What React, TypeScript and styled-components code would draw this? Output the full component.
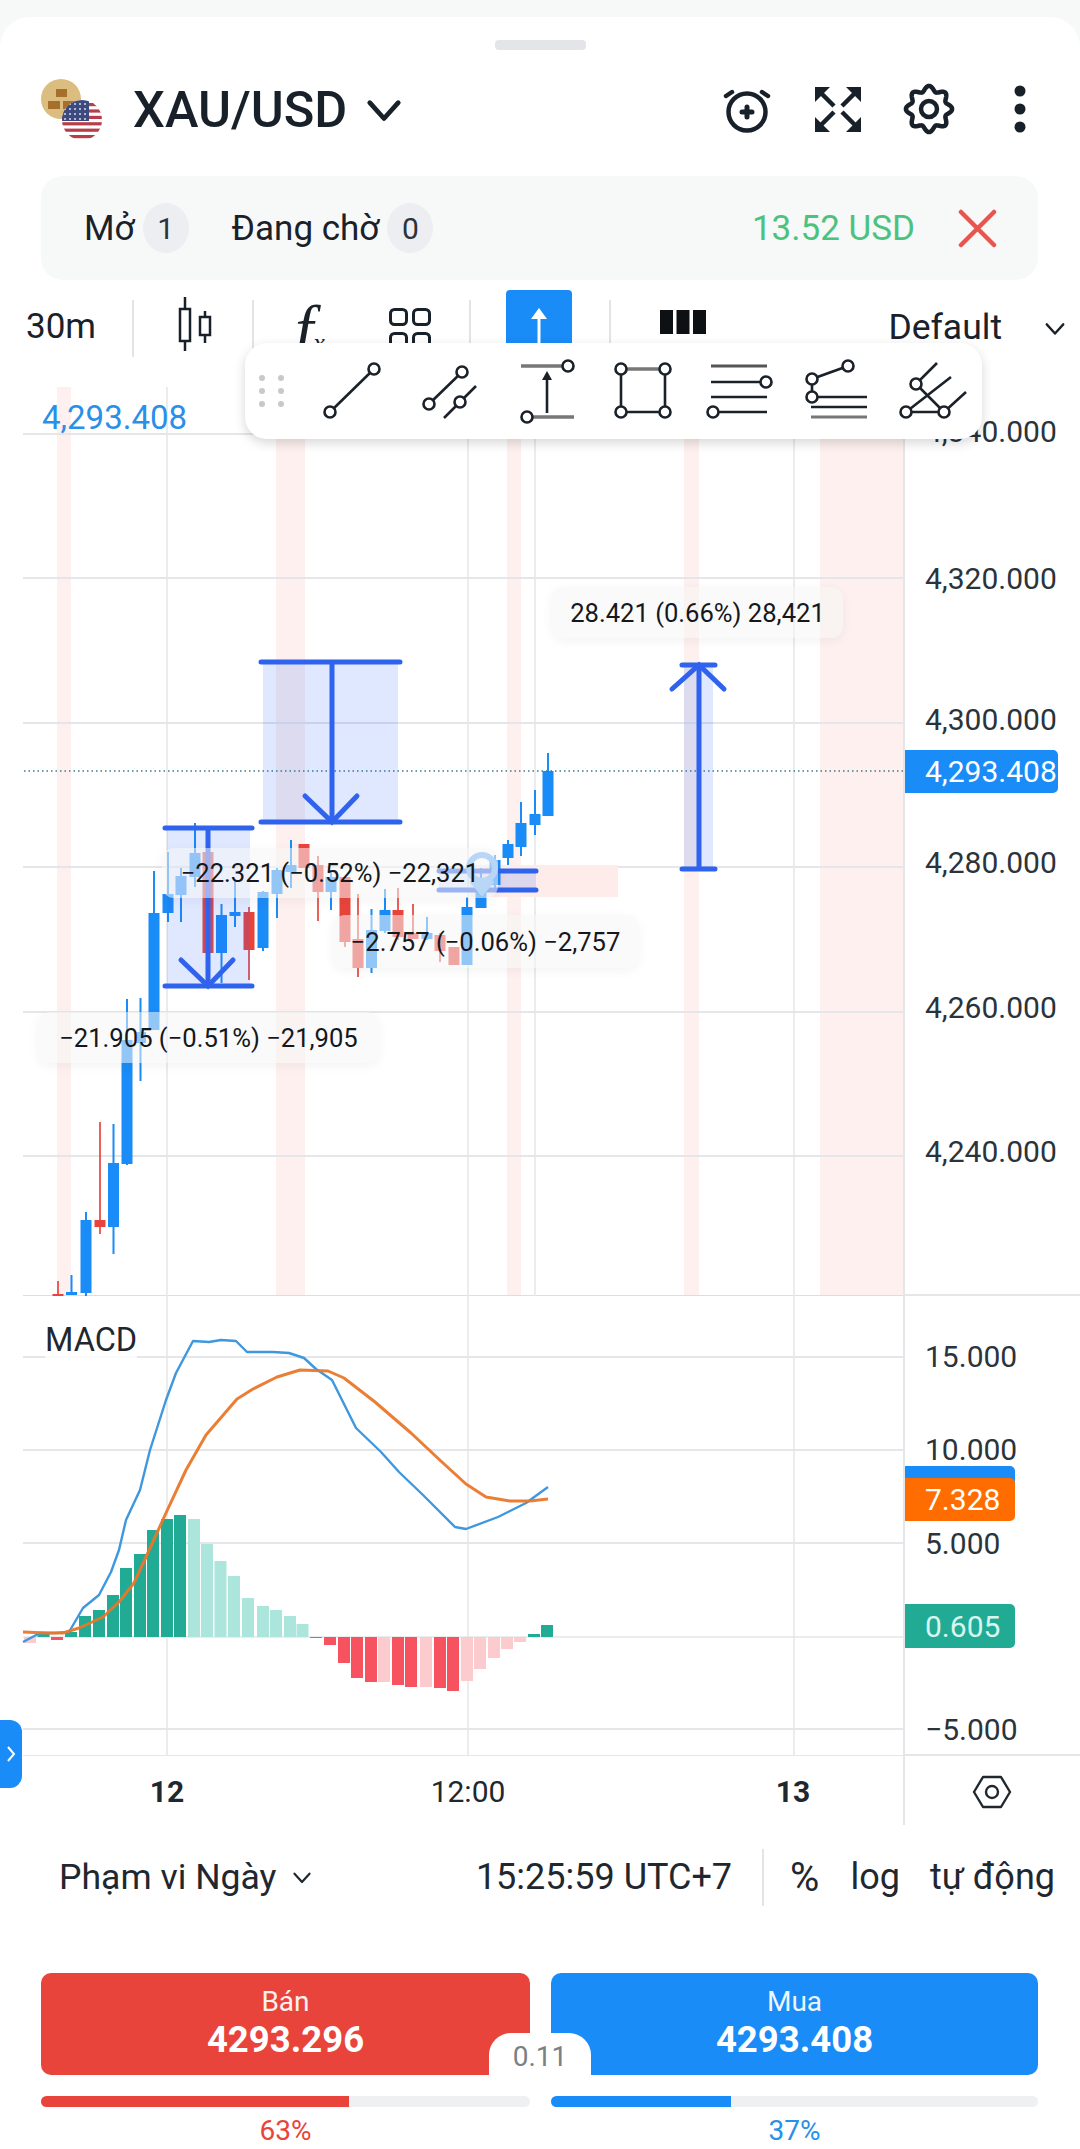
import React from 'react'
import styled, { createGlobalStyle } from 'styled-components'

const GlobalStyle = createGlobalStyle`
  html, body {
    margin: 0;
    padding: 0;
    background: #f7f8f8;
    font-family: Roboto, "Liberation Sans", sans-serif;
    color: #1a2129;
  }
  #root {
    width: 1080px;
  }
`

const BLUE = '#1a8cf7'
const RED = '#e8443c'
const TOOL_BLUE = '#2f63ee'
const GRID = '#e4e6e9'

// x, wick top, wick bottom, body top, body bottom, up?
const CANDLES: [number, number, number, number, number, boolean][] = [
  [58, 1281, 1295, 1294, 1296, false],
  [71.5, 1275, 1295, 1292, 1295, true],
  [86, 1212, 1296, 1220, 1293, true],
  [100, 1122, 1234, 1220, 1227, false],
  [113.5, 1124, 1254, 1163, 1227, true],
  [127, 999, 1165, 1040, 1164, true],
  [140.5, 998, 1081, 1032, 1043, true],
  [154, 871, 1030, 913, 1030, true],
  [168, 852, 922, 894, 913, true],
  [181, 868, 922, 876, 895, true],
  [195, 823, 887, 853, 877, true],
  [208, 852, 953, 852, 953, false],
  [221.5, 904, 983, 915, 953, true],
  [235, 880, 927, 912, 916, true],
  [249, 907, 980, 912, 950, false],
  [263, 891, 951, 892, 948, true],
  [277, 868, 918, 870, 894, true],
  [291, 840, 888, 865, 872, true],
  [304, 844, 868, 844, 868, false],
  [318, 856, 921, 865, 892, false],
  [331, 870, 910, 877, 892, true],
  [345, 877, 947, 877, 942, false],
  [358, 894, 977, 939, 968, false],
  [371.5, 909, 973, 930, 968, true],
  [385, 889, 933, 910, 931, true],
  [398, 888, 940, 910, 937, false],
  [413, 904, 939, 933, 939, false],
  [427, 917, 940, 933, 939, true],
  [440, 933, 962, 935, 951, false],
  [454, 947, 965, 947, 965, false],
  [467, 897, 965, 907, 965, true],
  [481, 868, 908, 882, 908, true],
  [495, 855, 890, 860, 885, true],
  [508, 840, 865, 844, 858, true],
  [521, 802, 856, 823, 847, true],
  [535, 790, 835, 814, 825, true],
  [548, 753, 816, 771, 816, true],
]

// x, height above zero (negative below), strong colour?
const HISTOGRAM: [number, number, boolean][] = [
  [30, -6, false], [43.5, 4, true], [57, -3, true], [71, 5, true], [85, 21, true], [99, 27, true],
  [113, 42, true], [126, 69, true], [140, 83, true], [153, 107, true], [167, 118, true], [180, 122, true],
  [194, 118, false], [207, 93, false], [220.5, 76, false], [234, 61, false], [248, 39, false], [263, 31, false],
  [276, 27, false], [290, 21, false], [302.5, 13, false], [316, -1, true], [330, -8, true], [344, -26, true],
  [357, -41, true], [371, -45, true], [384, -45, false], [398, -48, true], [411, -50, true], [426, -50, false],
  [440, -51, true], [453, -54, true], [467, -44, false], [480, -32, false], [494, -21, false], [507, -12, false],
  [520, -5, false], [534, 3, true], [547, 12, true],
]

const MACD_LINE =
  '23,1642 40,1633 55,1633 69,1632 83,1608 99,1595 111,1572 119,1550 126,1520 140,1490 150,1450 166,1400 176,1373 193,1341 209,1342 221,1340 236,1341 247,1352 273,1352 289,1353 304,1358 316,1369 332,1380 356,1428 381,1452 399,1472 423,1495 455,1527 466,1529 498,1517 526,1503 548,1487'
const SIGNAL_LINE =
  '23,1632 47,1633 63,1633 79,1628 103,1617 119,1602 134,1583 146,1557 166,1513 186,1470 206,1435 237,1399 253,1389 277,1377 300,1370 328,1371 344,1378 375,1402 411,1433 443,1463 466,1484 486,1497 510,1501 530,1501 548,1499'

const gearPath = (() => {
  const pts: string[] = []
  for (let i = 0; i < 160; i++) {
    const a = (i / 160) * Math.PI * 2 - Math.PI / 2
    const r = 20.5 + 2.6 * Math.cos(8 * (a + Math.PI / 2))
    pts.push(`${(28 + r * Math.cos(a)).toFixed(2)},${(28 + r * Math.sin(a)).toFixed(2)}`)
  }
  return pts.join(' ')
})()

const Sheet = styled.div`
  margin-top: 17px;
  width: 1080px;
  height: 2132px;
  background: #fff;
  border-radius: 30px 30px 0 0;
  overflow: hidden;
  display: flex;
  flex-direction: column;
`

const Handle = styled.div`
  width: 91px;
  height: 10px;
  margin: 23px auto 0;
  border-radius: 4px;
  background: #e3e5e8;
`

const Header = styled.header`
  height: 118px;
  margin-bottom: 8px;
  padding: 0 32px 0 41px;
  display: flex;
  align-items: center;
`

const Symbol = styled.h1`
  margin: 0 0 0 31px;
  font-size: 50.5px;
  font-weight: 500;
  color: #18212a;
`

const SymbolChevron = styled.span`
  display: flex;
  margin-left: 18px;
  color: #18212a;
`

const HeaderActions = styled.div`
  margin-left: auto;
  display: flex;
  align-items: center;
  gap: 35px;
`

const TabsPanel = styled.div`
  height: 104px;
  margin: 0 42px 0 41px;
  padding: 0 41px 0 43px;
  background: #f7f8f8;
  border-radius: 22px;
  display: flex;
  align-items: center;
  font-size: 35px;
`

const Badge = styled.span`
  width: 46px;
  height: 50px;
  margin-left: 8px;
  margin-right: 43px;
  border-radius: 50%;
  background: #eceef1;
  display: flex;
  align-items: center;
  justify-content: center;
  font-size: 30px;
  color: #2b333b;
`

const Profit = styled.span`
  margin-left: auto;
  margin-right: 43px;
  color: #4cc27f;
`

const ToolRow = styled.div`
  height: 97px;
  margin-top: 10px;
  display: flex;
  align-items: flex-start;
`

const ToolCell = styled.div<{ $width: number }>`
  flex: 0 0 ${(p) => p.$width}px;
  height: 70px;
  display: flex;
  align-items: center;
`

const ToolSep = styled.div`
  flex: 0 0 2px;
  height: 57px;
  margin-top: 10px;
  background: #e2e4e7;
`

const Interval = styled.span`
  margin-left: 26px;
  font-size: 35px;
  margin-top: 2px;
`

const Fx = styled.span`
  margin-left: 41px;
  margin-top: 8px;
  font-family: "Liberation Serif", serif;
  font-style: italic;
  font-size: 66px;
  line-height: 1;
  sub {
    font-size: 26px;
    vertical-align: baseline;
  }
`

const UpButton = styled.div`
  width: 66px;
  height: 70px;
  margin-left: 35px;
  background: ${BLUE};
  border-radius: 4px 4px 0 0;
  display: flex;
  align-items: center;
  justify-content: center;
`

const DefaultLabel = styled.span`
  margin-left: auto;
  font-size: 35.5px;
  margin-top: 4px;
`

const DefaultChevron = styled.span`
  display: flex;
  margin: 6px 0 0 42px;
`

const CandleSvg = styled.svg`
  margin-left: 42px;
`

const GridSvg = styled.svg`
  align-self: flex-start;
  margin: 18px 38px 0 auto;
`

const BarsSvg = styled.svg`
  margin: 0 0 6px 49px;
`

const GripSvg = styled.svg`
  margin: 0 30px 0 11px;
`

const ChartBlock = styled.div`
  position: relative;
`

const Pane = styled.div<{ $height: number }>`
  height: ${(p) => p.$height}px;
  display: grid;
  grid-template-columns: 903px 177px;
`

const Plot = styled.div`
  position: relative;
  svg {
    display: block;
  }
`

const Axis = styled.div<{ $line?: boolean }>`
  position: relative;
  border-left: 2px solid ${GRID};
  border-bottom: ${(p) => (p.$line ? `2px solid ${GRID}` : 'none')};
  box-sizing: border-box;
`

const AxisLabel = styled.span<{ $y: number }>`
  position: absolute;
  left: 20px;
  top: ${(p) => p.$y}px;
  transform: translateY(-50%);
  font-size: 30px;
  color: #2b333b;
  white-space: nowrap;
`

const PriceTag = styled.span<{ $y: number; $h: number; $w: number; $bg: string; $color?: string }>`
  position: absolute;
  left: 0;
  top: ${(p) => p.$y}px;
  height: ${(p) => p.$h}px;
  width: ${(p) => p.$w}px;
  padding-left: 20px;
  box-sizing: border-box;
  background: ${(p) => p.$bg};
  border-radius: 0 5px 5px 0;
  display: flex;
  align-items: center;
  font-size: 30px;
  color: ${(p) => p.$color ?? '#fff'};
`

const LastPrice = styled.span`
  position: absolute;
  left: 42px;
  top: 11px;
  font-size: 33px;
  color: #2a8fe8;
`

const MeasureTip = styled.div<{ $x: number; $y: number; $w: number; $h: number }>`
  position: absolute;
  left: ${(p) => p.$x}px;
  top: ${(p) => p.$y}px;
  width: ${(p) => p.$w}px;
  height: ${(p) => p.$h}px;
  border-radius: 12px;
  background: rgba(245, 245, 245, 0.55);
  box-shadow: 0 3px 12px rgba(0, 0, 0, 0.05);
  display: flex;
  align-items: center;
  justify-content: center;
  font-size: 25.6px;
  color: #14181d;
  white-space: nowrap;
`

const PaneName = styled.span`
  position: absolute;
  left: 45px;
  top: 25px;
  font-size: 32.5px;
  color: #1f272f;
  background: rgba(255, 255, 255, 0.8);
`

const DrawBar = styled.div`
  position: absolute;
  left: 245px;
  top: -44px;
  width: 737px;
  height: 96px;
  z-index: 2;
  background: #fff;
  border-radius: 22px;
  box-shadow: 0 4px 12px rgba(0, 0, 0, 0.16);
  display: flex;
  align-items: center;
  svg {
    flex: none;
  }
`

const SideTab = styled.div`
  position: absolute;
  left: 0;
  top: 1333px;
  width: 22px;
  height: 68px;
  background: ${BLUE};
  border-radius: 0 12px 12px 0;
  display: flex;
  align-items: center;
  justify-content: center;
  z-index: 2;
`

const Tick = styled.span<{ $x: number; $bold?: boolean }>`
  position: absolute;
  left: ${(p) => p.$x}px;
  top: 35px;
  transform: translate(-50%, -50%);
  font-size: 30px;
  font-weight: ${(p) => (p.$bold ? 700 : 400)};
  color: #1f272f;
`

const AxisCorner = styled.div`
  display: flex;
  justify-content: center;
  padding: 19px 0 0 0;
  width: 178px;
  margin-left: -2px;
`

const RangeRow = styled.div`
  height: 104px;
  padding: 0 25px 0 59px;
  display: flex;
  align-items: center;
  font-size: 36px;
  color: #1f272f;
  box-sizing: border-box;
`

const RangeName = styled.span`
  font-size: 35.6px;
`

const RangeChevron = styled.span`
  display: flex;
  margin-left: 16px;
`

const RangeSep = styled.div`
  width: 2px;
  height: 57px;
  margin: 0 26px 0 30px;
  background: #e2e4e7;
`

const Clock = styled.span`
  margin-left: auto;
`

const Scale = styled.span<{ $gap?: number; $size?: number }>`
  margin-left: ${(p) => p.$gap ?? 0}px;
  font-size: ${(p) => p.$size ?? 36}px;
`

const Trade = styled.div`
  position: relative;
  margin: 44px 42px 0 41px;
  display: grid;
  grid-template-columns: 489px 487px;
  column-gap: 21px;
`

const TradeButton = styled.div<{ $color: string }>`
  height: 102px;
  background: ${(p) => p.$color};
  border-radius: 10px;
  color: #fff;
  display: flex;
  flex-direction: column;
  align-items: center;
  padding-top: 13px;
  box-sizing: border-box;
`

const TradeLabel = styled.span`
  font-size: 28px;
  line-height: 32px;
  opacity: 0.92;
`

const TradePrice = styled.span`
  font-size: 36.5px;
  line-height: 44px;
  font-weight: 700;
`

const Spread = styled.div`
  position: absolute;
  left: 448px;
  top: 60px;
  width: 102px;
  height: 42px;
  background: #fff;
  border-radius: 22px 22px 0 0;
  display: flex;
  align-items: flex-end;
  justify-content: center;
  font-size: 28px;
  color: #7b8086;
  line-height: 36px;
`

const Sentiment = styled.div`
  margin-top: 21px;
  display: flex;
  flex-direction: column;
  align-items: center;
`

const Track = styled.div`
  width: 100%;
  height: 11px;
  background: #eef0f2;
  border-radius: 6px;
  overflow: hidden;
`

const Fill = styled.div<{ $color: string }>`
  height: 100%;
  background: ${(p) => p.$color};
`

const Percent = styled.span<{ $color: string }>`
  margin-top: 7px;
  font-size: 28px;
  color: ${(p) => p.$color};
`

const SymbolLogo = () => (
  <svg width="61" height="61" viewBox="0 0 61 61">
    <defs>
      <clipPath id="flag">
        <circle cx="41" cy="41" r="20" />
      </clipPath>
    </defs>
    <circle cx="20" cy="20" r="20" fill="#dabd7f" />
    <rect x="15" y="10" width="11" height="8" fill="#a66f2c" />
    <rect x="7" y="22" width="12" height="8" fill="#a66f2c" />
    <rect x="22" y="22" width="12" height="8" fill="#a66f2c" />
    <g clipPath="url(#flag)">
      <rect x="21" y="21" width="40" height="40" fill="#fff" />
      {[0, 1, 2, 3, 4, 5].map((i) => (
        <rect key={i} x="21" y={24 + i * 6.4} width="40" height="3.2" fill="#b73d4b" />
      ))}
      <rect x="21" y="21" width="27" height="21" fill="#3d4a80" />
      {[0, 1, 2, 3].map((r) =>
        [0, 1, 2, 3, 4].map((c) => (
          <circle key={`${r}-${c}`} cx={24 + c * 5} cy={25 + r * 5} r="1" fill="#d8dcec" />
        )),
      )}
    </g>
  </svg>
)

const AlarmIcon = () => (
  <svg width="56" height="56" viewBox="0 0 56 56" fill="none" stroke="#18212a" strokeWidth="4.5" strokeLinecap="round">
    <circle cx="28" cy="31" r="18.5" />
    <path d="M7 15 13 11M49 15 43 11" />
    <path d="M28 26v10M23 31h10" strokeWidth="5" />
  </svg>
)

const ExpandIcon = () => (
  <svg width="56" height="56" viewBox="0 0 56 56" fill="#18212a" stroke="#18212a">
    <g strokeWidth="4.5" fill="none">
      <path d="M10 11 24 25M46 11 32 25M10 45 24 31M46 45 32 31" />
    </g>
    <g stroke="none">
      <path d="M5 6H20L5 21Z" />
      <path d="M51 6H36L51 21Z" />
      <path d="M5 51H20L5 36Z" />
      <path d="M51 51H36L51 36Z" />
    </g>
  </svg>
)

const GearIcon = () => (
  <svg width="56" height="56" viewBox="0 0 56 56" fill="none" stroke="#18212a" strokeWidth="4.5">
    <polygon points={gearPath} strokeLinejoin="round" />
    <circle cx="28" cy="28" r="8" />
  </svg>
)

const DotsIcon = () => (
  <svg width="56" height="56" viewBox="0 0 56 56" fill="#18212a">
    <circle cx="28" cy="10" r="5.5" />
    <circle cx="28" cy="28" r="5.5" />
    <circle cx="28" cy="46" r="5.5" />
  </svg>
)

const CandleIcon = () => (
  <CandleSvg width="40" height="56" viewBox="0 0 40 56" fill="none" stroke="#18212a" strokeWidth="2.5">
    <path d="M9 0V54M29 14V46" />
    <rect x="4" y="12" width="10" height="32" fill="#fff" />
    <rect x="24" y="20" width="10" height="18" fill="#fff" />
  </CandleSvg>
)

const GridIcon = () => (
  <GridSvg width="42" height="42" viewBox="0 0 42 42" fill="none" stroke="#18212a" strokeWidth="3">
    <rect x="1.5" y="1.5" width="16" height="15" rx="4" />
    <rect x="24.5" y="1.5" width="16" height="15" rx="4" />
    <rect x="1.5" y="25.5" width="16" height="15" rx="4" />
    <rect x="24.5" y="25.5" width="16" height="15" rx="4" />
  </GridSvg>
)

const BarsIcon = () => (
  <BarsSvg width="46" height="24" viewBox="0 0 46 24" fill="#0e1114">
    <rect width="13" height="24" />
    <rect x="16.5" width="13" height="24" />
    <rect x="33" width="13" height="24" />
  </BarsSvg>
)

const Chevron = ({ size, width }: { size: number; width: number }) => (
  <svg width={size} height={size} viewBox="0 0 24 24" fill="none" stroke="currentColor" strokeWidth={width} strokeLinecap="round" strokeLinejoin="round">
    <path d="M3 8 12 18 21 8" />
  </svg>
)

// Drawing tool icons are kept in the page coordinates measured from the bar
const DrawIcon = ({ from, to, children }: { from: number; to: number; children: React.ReactNode }) => (
  <svg width={to - from} height="68" viewBox={`${from} 357 ${to - from} 68`} fill="#fff" stroke="#1a2129" strokeWidth="2.6">
    {children}
  </svg>
)

const Knob = ({ x, y }: { x: number; y: number }) => <circle cx={x} cy={y} r="5.5" />

const DrawBarContent = () => (
  <DrawBar>
    <GripSvg width="33" height="40" viewBox="0 0 33 40" fill="#c6c9cd">
      {[0, 13, 26].map((y) => (
        <g key={y}>
          <circle cx="6" cy={y + 7} r="3" />
          <circle cx="25" cy={y + 7} r="3" />
        </g>
      ))}
    </GripSvg>
    <DrawIcon from={319} to={402}>
      <path d="M330 412 374 369" />
      <Knob x={330} y={412} />
      <Knob x={374} y={369} />
    </DrawIcon>
    <DrawIcon from={402} to={500}>
      <path d="M429 404 462 372M444 418 476 386" />
      <Knob x={429} y={404} />
      <Knob x={462} y={372} />
      <Knob x={460} y={402} />
    </DrawIcon>
    <DrawIcon from={500} to={596}>
      <path d="M521 366H564M531 417H574" stroke="#777" strokeWidth="3.5" />
      <path d="M547 413V378" />
      <path d="M547 371 552 380H542Z" fill="#1a2129" stroke="none" />
      <Knob x={568} y={366} />
      <Knob x={527} y={417} />
    </DrawIcon>
    <DrawIcon from={596} to={690}>
      <path d="M621 369V412H665V369" />
      <path d="M621 369H665" stroke="#777" strokeWidth="3.5" />
      <Knob x={621} y={369} />
      <Knob x={665} y={369} />
      <Knob x={621} y={412} />
      <Knob x={665} y={412} />
    </DrawIcon>
    <DrawIcon from={690} to={786}>
      <path d="M711 366H767" stroke="#555" strokeWidth="3" />
      <path d="M711 382H766M711 397H767M713 412H767" />
      <Knob x={766} y={382} />
      <Knob x={713} y={412} />
    </DrawIcon>
    <DrawIcon from={786} to={888}>
      <path d="M848 366 812 379V397H867M811 407H867" />
      <path d="M811 417H867" stroke="#777" strokeWidth="3" />
      <Knob x={848} y={366} />
      <Knob x={812} y={379} />
      <Knob x={812} y={397} />
    </DrawIcon>
    <DrawIcon from={888} to={982}>
      <path d="M906 412H944M937 363 916 384 944 412M951 377 906 412M966 392 944 412" />
      <Knob x={916} y={384} />
      <Knob x={906} y={412} />
      <Knob x={944} y={412} />
    </DrawIcon>
  </DrawBar>
)

const Measure = ({ x, w, top, bottom, cx, up }: { x: number; w: number; top: number; bottom: number; cx: number; up?: boolean }) => (
  <g>
    <rect x={x} y={top} width={w} height={bottom - top} fill="#2962ff" opacity="0.15" />
    <g stroke={TOOL_BLUE} strokeWidth="5" strokeLinecap="round" fill="none">
      <path d={`M${x - 2} ${top}H${x + w + 2}M${x - 2} ${bottom}H${x + w + 2}M${cx} ${top}V${bottom}`} />
      {up ? (
        <path d={`M${cx - 27} ${top + 24} ${cx} ${top} ${cx + 25} ${top + 24}`} />
      ) : (
        <path d={`M${cx - 27} ${bottom - 26} ${cx} ${bottom} ${cx + 25} ${bottom - 26}`} />
      )}
    </g>
  </g>
)

const MainChart = () => (
  <svg width="903" height="909" viewBox="0 387 903 909">
    {[
      [57, 14],
      [276, 29],
      [507, 14],
      [684, 15],
      [820, 83],
    ].map(([x, w]) => (
      <rect key={x} x={x} y="387" width={w} height="909" fill="#fdf0ee" />
    ))}
    <g stroke={GRID} strokeWidth="2">
      {[434, 578, 723, 867, 1012, 1156].map((y) => (
        <path key={y} d={`M23 ${y}H903`} />
      ))}
      <path d="M23 1296H903" stroke="#dcdfe2" />
    </g>
    <g stroke={GRID} strokeWidth="1.5">
      {[167, 468, 535, 794].map((x) => (
        <path key={x} d={`M${x} 387V1296`} />
      ))}
    </g>
    <rect x="470" y="865" width="148" height="32" fill="#fdecea" />
    {CANDLES.map(([x, wt, wb, bt, bb, up]) => (
      <g key={x} fill={up ? BLUE : RED}>
        <rect x={x - 1} y={wt} width="2" height={wb - wt} opacity={up ? 1 : 0.85} />
        <rect x={x - 5.5} y={bt} width="11" height={Math.max(bb - bt, 2)} />
      </g>
    ))}
    <path d="M24 771H903" stroke="#3a7a90" strokeWidth="1.5" strokeDasharray="1.5 3" />
    <Measure x={263} w={135} top={662} bottom={822} cx={332} />
    <Measure x={167} w={83} top={828} bottom={986} cx={208} />
    <Measure x={684} w={29} top={665} bottom={869} cx={699} up />
    <g>
      <rect x="439" y="871" width="97" height="19" fill="#2962ff" opacity="0.15" />
      <path d="M439 871H536M439 890H536" stroke={TOOL_BLUE} strokeWidth="5" strokeLinecap="round" />
    </g>
    <g fill="none" stroke="#6db0f6" strokeWidth="6">
      <circle cx="482" cy="868" r="13" />
      <path d="M472 880 482 892 492 880" fill="#6db0f6" />
    </g>
  </svg>
)

const MacdChart = () => (
  <svg width="903" height="460" viewBox="0 1296 903 460">
    <g stroke={GRID} strokeWidth="2">
      {[1357, 1450, 1543].map((y) => (
        <path key={y} d={`M23 ${y}H903`} />
      ))}
      <path d="M23 1637H903" strokeWidth="1.5" />
      <path d="M23 1729H903" />
      <path d="M23 1756H903" />
    </g>
    <g stroke={GRID} strokeWidth="1.5">
      {[167, 468, 794].map((x) => (
        <path key={x} d={`M${x} 1296V1756`} />
      ))}
    </g>
    {HISTOGRAM.map(([x, h, strong]) => (
      <rect
        key={x}
        x={x - 6}
        y={h > 0 ? 1637 - h : 1637}
        width="12"
        height={Math.abs(h)}
        fill={h > 0 ? (strong ? '#22ab94' : '#ace5dc') : strong ? '#f7525f' : '#fccbcd'}
      />
    ))}
    <polyline points={MACD_LINE} fill="none" stroke="#3f97de" strokeWidth="2.4" strokeLinejoin="round" />
    <polyline points={SIGNAL_LINE} fill="none" stroke="#e9772a" strokeWidth="3" strokeLinejoin="round" opacity="0.95" />
  </svg>
)

export default function App() {
  return (
    <>
      <GlobalStyle />
      <Sheet>
        <Handle />
        <Header>
          <SymbolLogo />
          <Symbol>XAU/USD</Symbol>
          <SymbolChevron>
            <Chevron size={38} width={3} />
          </SymbolChevron>
          <HeaderActions>
            <AlarmIcon />
            <ExpandIcon />
            <GearIcon />
            <DotsIcon />
          </HeaderActions>
        </Header>
        <TabsPanel>
          <span>Mở</span>
          <Badge>1</Badge>
          <span>Đang chờ</span>
          <Badge>0</Badge>
          <Profit>13.52 USD</Profit>
          <svg width="39" height="39" viewBox="0 0 39 39" stroke="#e8554e" strokeWidth="4.5" strokeLinecap="round">
            <path d="M3 3 36 36M36 3 3 36" />
          </svg>
        </TabsPanel>
        <ToolRow>
          <ToolCell $width={132}>
            <Interval>30m</Interval>
          </ToolCell>
          <ToolSep />
          <ToolCell $width={118}>
            <CandleIcon />
          </ToolCell>
          <ToolSep />
          <ToolCell $width={215}>
            <Fx>
              f<sub>x</sub>
            </Fx>
            <GridIcon />
          </ToolCell>
          <ToolSep />
          <ToolCell $width={138}>
            <UpButton>
              <svg width="24" height="36" viewBox="0 0 24 36" fill="none" stroke="#fff" strokeWidth="3">
                <path d="M12 36V8" />
                <path d="M12 1 20 12H4Z" fill="#fff" stroke="none" />
              </svg>
            </UpButton>
          </ToolCell>
          <ToolSep />
          <ToolCell $width={455}>
            <BarsIcon />
            <DefaultLabel>Default</DefaultLabel>
            <DefaultChevron>
              <Chevron size={22} width={2.6} />
            </DefaultChevron>
          </ToolCell>
        </ToolRow>
        <ChartBlock>
          <DrawBarContent />
          <Pane $height={909}>
            <Plot>
              <MainChart />
              <LastPrice>4,293.408</LastPrice>
              <MeasureTip $x={552} $y={200} $w={291} $h={51}>
                28.421 (0.66%) 28,421
              </MeasureTip>
              <MeasureTip $x={162} $y={461} $w={336} $h={50}>
                −22.321 (−0.52%) −22,321
              </MeasureTip>
              <MeasureTip $x={333} $y={528} $w={305} $h={53}>
                −2.757 (−0.06%) −2,757
              </MeasureTip>
              <MeasureTip $x={38} $y={625} $w={341} $h={51}>
                −21.905 (−0.51%) −21,905
              </MeasureTip>
            </Plot>
            <Axis $line>
              <AxisLabel $y={44}>4,340.000</AxisLabel>
              <AxisLabel $y={191}>4,320.000</AxisLabel>
              <AxisLabel $y={332}>4,300.000</AxisLabel>
              <AxisLabel $y={475}>4,280.000</AxisLabel>
              <AxisLabel $y={620}>4,260.000</AxisLabel>
              <AxisLabel $y={764}>4,240.000</AxisLabel>
              <PriceTag $y={363} $h={43} $w={153} $bg={BLUE}>
                4,293.408
              </PriceTag>
            </Axis>
          </Pane>
          <Pane $height={460}>
            <Plot>
              <MacdChart />
              <PaneName>MACD</PaneName>
            </Plot>
            <Axis $line>
              <AxisLabel $y={60}>15.000</AxisLabel>
              <AxisLabel $y={153}>10.000</AxisLabel>
              <AxisLabel $y={247}>5.000</AxisLabel>
              <AxisLabel $y={433}>−5.000</AxisLabel>
              <PriceTag $y={170} $h={44} $w={110} $bg={BLUE}>
                7.933
              </PriceTag>
              <PriceTag $y={182} $h={43} $w={110} $bg="#ff6d00">
                7.328
              </PriceTag>
              <PriceTag $y={308} $h={44} $w={110} $bg="#22ab94" $color="#d9f5ef">
                0.605
              </PriceTag>
            </Axis>
          </Pane>
          <Pane $height={69}>
            <Plot>
              <Tick $x={167} $bold>
                12
              </Tick>
              <Tick $x={468}>12:00</Tick>
              <Tick $x={793} $bold>
                13
              </Tick>
            </Plot>
            <Axis>
              <AxisCorner>
                <svg width="40" height="34" viewBox="0 0 40 34" fill="none" stroke="#1f272f" strokeWidth="2.4">
                  <polygon points="2,17 11,2 29,2 38,17 29,32 11,32" strokeLinejoin="round" />
                  <circle cx="20" cy="17" r="6" />
                </svg>
              </AxisCorner>
            </Axis>
          </Pane>
          <SideTab>
            <svg width="10" height="18" viewBox="0 0 10 18" fill="none" stroke="#fff" strokeWidth="2">
              <path d="M2 2 8 9 2 16" />
            </svg>
          </SideTab>
        </ChartBlock>
        <RangeRow>
          <RangeName>Phạm vi Ngày</RangeName>
          <RangeChevron>
            <Chevron size={20} width={2.6} />
          </RangeChevron>
          <Clock>15:25:59 UTC+7</Clock>
          <RangeSep />
          <Scale $size={40}>%</Scale>
          <Scale $gap={31}>log</Scale>
          <Scale $gap={30}>tự động</Scale>
        </RangeRow>
        <Trade>
          <TradeButton $color={RED}>
            <TradeLabel>Bán</TradeLabel>
            <TradePrice>4293.296</TradePrice>
          </TradeButton>
          <TradeButton $color={BLUE}>
            <TradeLabel>Mua</TradeLabel>
            <TradePrice>4293.408</TradePrice>
          </TradeButton>
          <Spread>0.11</Spread>
          <Sentiment>
            <Track>
              <Fill $color={RED} style={{ width: '63%' }} />
            </Track>
            <Percent $color={RED}>63%</Percent>
          </Sentiment>
          <Sentiment>
            <Track>
              <Fill $color={BLUE} style={{ width: '37%' }} />
            </Track>
            <Percent $color="#2a8fe8">37%</Percent>
          </Sentiment>
        </Trade>
      </Sheet>
    </>
  )
}
